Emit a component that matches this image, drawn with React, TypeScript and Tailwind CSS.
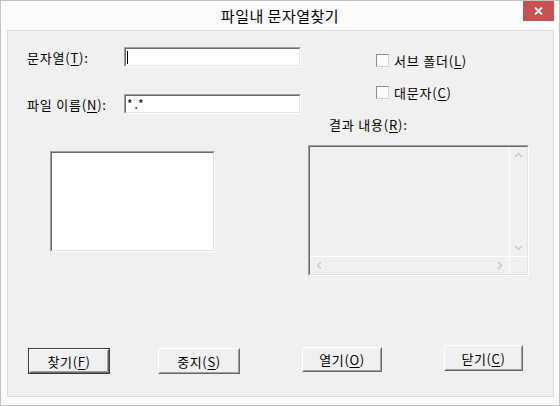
import React from "react";

function U({ children }: { children: React.ReactNode }) {
  return <span className="underline underline-offset-[2px]">{children}</span>;
}

function Button({
  children,
  def,
  className,
}: {
  children: React.ReactNode;
  def?: boolean;
  className: string;
}) {
  if (def) {
    return (
      <div className={"border border-[#3c3c3c] " + className}>
        <div className="h-full w-full border border-t-white border-l-white border-b-[#696969] border-r-[#696969]">
          <div className="flex h-full w-full items-center justify-center border border-t-[#f0f0f0] border-l-[#f0f0f0] border-b-[#a0a0a0] border-r-[#a0a0a0] bg-[#f0f0f0] text-[13px] leading-none tracking-[0.6px] text-black">
            {children}
          </div>
        </div>
      </div>
    );
  }
  return (
    <div className={"border border-t-white border-l-white border-b-[#696969] border-r-[#696969] " + className}>
      <div className="flex h-full w-full items-center justify-center border border-t-[#f0f0f0] border-l-[#f0f0f0] border-b-[#a0a0a0] border-r-[#a0a0a0] bg-[#f0f0f0] text-[13px] leading-none tracking-[0.6px] text-black">
        {children}
      </div>
    </div>
  );
}

function Check({ children, className }: { children: React.ReactNode; className: string }) {
  return (
    <div className={"flex items-center gap-[5px] " + className}>
      <div className="h-[13px] w-[13px] border border-t-[#8a8a8a] border-l-[#8a8a8a] border-b-[#d5d5d5] border-r-[#d5d5d5] bg-[#fbfbfb]" />
      <span className="text-[13px] leading-none tracking-[0.8px] text-black">{children}</span>
    </div>
  );
}

export default function App() {
  return (
    <div className="flex h-[406px] w-[560px] flex-col border border-[#c2c2c2] bg-[#fbfbfb] font-['Noto_Sans_CJK_KR',sans-serif] text-black">
      {/* title bar */}
      <div className="relative flex h-[29px] items-center justify-center">
        <span className="text-[15px] leading-none tracking-[0.5px] text-[#000]">파일내 문자열찾기</span>
        <div className="absolute right-[5px] top-0 flex h-[20px] w-[31px] items-center justify-center bg-[#c75050]">
          <svg width="9" height="8" viewBox="0 0 9 8">
            <path d="M1 0.5 L8 7.5 M8 0.5 L1 7.5" stroke="white" strokeWidth="1.8" />
          </svg>
        </div>
      </div>

      {/* client */}
      <div className="mb-[8px] ml-[6px] mr-[5px] flex flex-1 flex-col border border-[#dadada] bg-[#f0f0f0]">
        <div className="flex h-[246px]">
          {/* left column */}
          <div className="flex w-[300px] flex-col pl-[19px]">
            <div className="mt-[16px] flex h-[20px] items-center">
              <span className="w-[97px] text-[13px] leading-none tracking-[0.8px]">
                문자열(<U>T</U>):
              </span>
              <div className="h-[20px] w-[177px] border border-t-[#a0a0a0] border-l-[#a0a0a0] border-b-white border-r-white">
                <div className="flex h-full w-full items-center border border-t-[#696969] border-l-[#696969] border-b-[#e3e3e3] border-r-[#e3e3e3] bg-white pl-[1px]">
                  <div className="h-[13px] w-[1px] bg-black" />
                </div>
              </div>
            </div>
            <div className="mt-[27px] flex h-[20px] items-center">
              <span className="w-[97px] text-[13px] leading-none tracking-[0.8px]">
                파일 이름(<U>N</U>):
              </span>
              <div className="h-[20px] w-[177px] border border-t-[#a0a0a0] border-l-[#a0a0a0] border-b-white border-r-white">
                <div className="flex h-full w-full items-center border border-t-[#696969] border-l-[#696969] border-b-[#e3e3e3] border-r-[#e3e3e3] bg-white pl-[1px]">
                  <span className="text-[12px] leading-none tracking-[2px]">*.*</span>
                </div>
              </div>
            </div>
            <div className="ml-[23px] mt-[37px] h-[101px] w-[165px] border border-t-[#a0a0a0] border-l-[#a0a0a0] border-b-white border-r-white">
              <div className="h-full w-full border border-t-[#696969] border-l-[#696969] border-b-[#e3e3e3] border-r-[#e3e3e3] bg-white" />
            </div>
          </div>

          {/* right column */}
          <div className="flex flex-col">
            <Check className="ml-[68px] mt-[23px] h-[13px]">
              서브 폴더(<U>L</U>)
            </Check>
            <Check className="ml-[68px] mt-[19px] h-[13px]">
              대문자(<U>C</U>)
            </Check>
            <div className="ml-[21px] mt-[19px] h-[14px] text-[13px] leading-[14px] tracking-[0.8px]">
              결과 내용(<U>R</U>):
            </div>
            <div className="mt-[13px] h-[131px] w-[221px] border border-t-[#a0a0a0] border-l-[#a0a0a0] border-b-white border-r-white">
              <div className="flex h-full w-full flex-col border border-t-[#696969] border-l-[#696969] border-b-[#e3e3e3] border-r-[#e3e3e3] bg-[#f0f0f0]">
                <div className="flex flex-1">
                  <div className="flex-1 border-b border-r border-white" />
                  <div className="flex w-[17px] flex-col items-center justify-between border-b border-white py-[5px]">
                    <svg width="9" height="6" viewBox="0 0 9 6">
                      <path d="M1 5 L4.5 1.5 L8 5" fill="none" stroke="#c4c4c4" strokeWidth="1.4" />
                    </svg>
                    <svg width="9" height="6" viewBox="0 0 9 6">
                      <path d="M1 1 L4.5 4.5 L8 1" fill="none" stroke="#c4c4c4" strokeWidth="1.4" />
                    </svg>
                  </div>
                </div>
                <div className="flex h-[17px]">
                  <div className="flex flex-1 items-center justify-between border-r border-white px-[6px]">
                    <svg width="6" height="9" viewBox="0 0 6 9">
                      <path d="M5 1 L1.5 4.5 L5 8" fill="none" stroke="#c4c4c4" strokeWidth="1.4" />
                    </svg>
                    <svg width="6" height="9" viewBox="0 0 6 9">
                      <path d="M1 1 L4.5 4.5 L1 8" fill="none" stroke="#c4c4c4" strokeWidth="1.4" />
                    </svg>
                  </div>
                  <div className="w-[17px]" />
                </div>
              </div>
            </div>
          </div>
        </div>

        {/* buttons */}
        <div className="mt-[68px] flex items-start">
          <Button def className="ml-[20px] mt-[3px] h-[26px] w-[82px]">
            찾기(<U>F</U>)
          </Button>
          <Button className="ml-[48px] mt-[3px] h-[26px] w-[82px]">
            중지(<U>S</U>)
          </Button>
          <Button className="ml-[62px] mt-[2px] h-[25px] w-[80px]">
            열기(<U>O</U>)
          </Button>
          <Button className="ml-[62px] mt-0 h-[26px] w-[79px]">
            닫기(<U>C</U>)
          </Button>
        </div>
      </div>
    </div>
  );
}
